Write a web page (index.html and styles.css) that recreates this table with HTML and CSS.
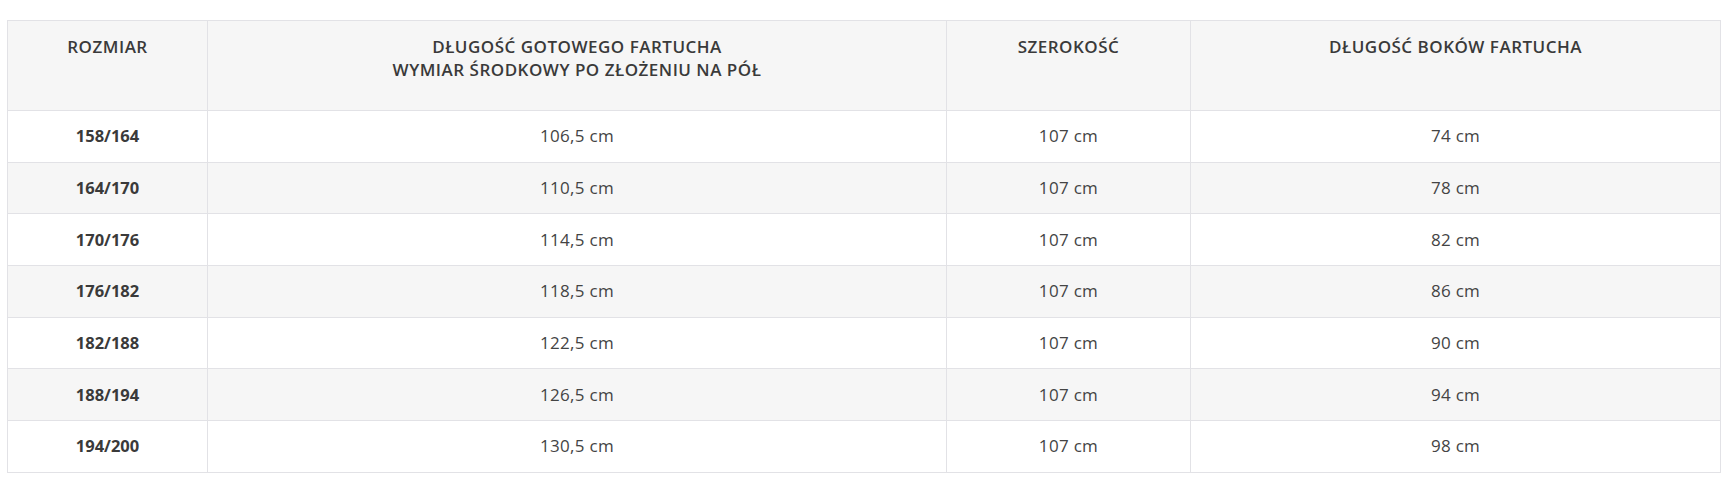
FILE: index.html
```html
<!DOCTYPE html>
<html lang="pl">
<head>
<meta charset="utf-8">
<title>Tabela rozmiarów</title>
<link rel="stylesheet" href="styles.css">
</head>
<body>
<table class="sizes">
  <colgroup>
    <col class="c1"><col class="c2"><col class="c3"><col class="c4">
  </colgroup>
  <thead>
    <tr>
      <th>ROZMIAR</th>
      <th>DŁUGOŚĆ GOTOWEGO FARTUCHA<br>WYMIAR ŚRODKOWY PO ZŁOŻENIU NA PÓŁ</th>
      <th>SZEROKOŚĆ</th>
      <th>DŁUGOŚĆ BOKÓW FARTUCHA</th>
    </tr>
  </thead>
  <tbody>
    <tr><td class="size">158/164</td><td>106,5 cm</td><td>107 cm</td><td>74 cm</td></tr>
    <tr><td class="size">164/170</td><td>110,5 cm</td><td>107 cm</td><td>78 cm</td></tr>
    <tr><td class="size">170/176</td><td>114,5 cm</td><td>107 cm</td><td>82 cm</td></tr>
    <tr><td class="size">176/182</td><td>118,5 cm</td><td>107 cm</td><td>86 cm</td></tr>
    <tr><td class="size">182/188</td><td>122,5 cm</td><td>107 cm</td><td>90 cm</td></tr>
    <tr><td class="size">188/194</td><td>126,5 cm</td><td>107 cm</td><td>94 cm</td></tr>
    <tr><td class="size">194/200</td><td>130,5 cm</td><td>107 cm</td><td>98 cm</td></tr>
  </tbody>
</table>
</body>
</html>
```
FILE: styles.css
```css
html, body {
  margin: 0;
  padding: 0;
  background: #ffffff;
}
body {
  padding: 20px 16px 0 7px;
  font-family: "Open Sans", "Liberation Sans", sans-serif;
  color: #3a3a3a;
}
.sizes {
  width: 1713px;
  border-collapse: collapse;
  table-layout: fixed;
  font-size: 16px;
}
.c1 { width: 200px; }
.c2 { width: 739px; }
.c3 { width: 244px; }
.c4 { width: 530px; }
.sizes th,
.sizes td {
  border: 1px solid #e2e2e6;
  text-align: center;
}
.sizes th {
  height: 90px;
  box-sizing: border-box;
  vertical-align: top;
  padding: 14px 10px 0;
  font-size: 17px;
  font-weight: 600;
  letter-spacing: 0.5px;
  line-height: 23px;
  background: #f6f6f6;
}
.sizes td {
  height: 51.7px;
  box-sizing: border-box;
  padding: 0 10px;
  vertical-align: middle;
  font-size: 17px;
  letter-spacing: 0.3px;
  line-height: 22px;
  font-weight: 400;
  color: #444444;
}
.sizes td.size {
  font-size: 16.5px;
  letter-spacing: 0;
  font-weight: 700;
  color: #3a3a3a;
}
.sizes tbody tr:nth-child(even) td {
  background: #f6f6f6;
}
```
